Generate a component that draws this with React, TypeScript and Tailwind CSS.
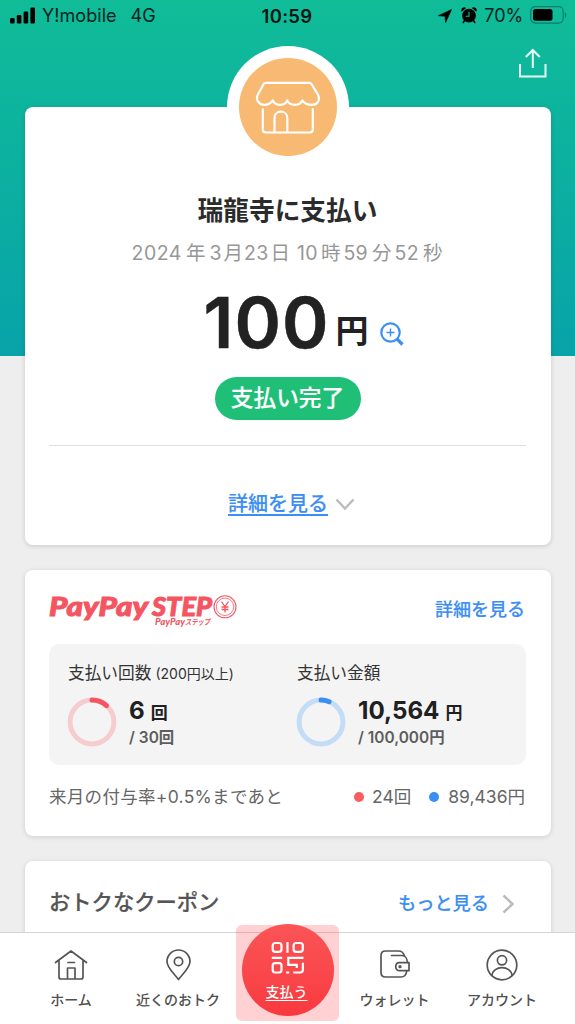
import type { ReactNode } from 'react';

function StatusBar() {
  return (
    <header className="flex h-8 items-center pl-[10px] pr-[8px] text-[18px] leading-8 text-[#04231d]">
      <div className="flex flex-1 items-center">
        <svg className="-mt-[2px]" width="26" height="17" viewBox="0 0 26 17" fill="#000">
          <rect x="0" y="11" width="4.600" height="5.500" rx="1.200" />
          <rect x="6.800" y="8" width="4.600" height="8.500" rx="1.200" />
          <rect x="13.600" y="4.500" width="4.600" height="12" rx="1.200" />
          <rect x="20.400" y="0.500" width="4.600" height="16" rx="1.200" />
        </svg>
        <span className="ml-[6px] tracking-[0.05px]">Y!mobile</span>
        <span className="ml-[14px]">4G</span>
      </div>
      <span className="pr-[3px] text-[18.500px] font-semibold tracking-[0.3px] text-[#02150f]">10:59</span>
      <div className="flex flex-1 items-center justify-end">
        <svg width="14" height="14" viewBox="0 0 14 14" fill="#000">
          <path d="M13.600 0.400 7.600 13.600 7 7.200 0.400 6.700Z" stroke="#000" strokeWidth="0.600" />
        </svg>
        <svg className="-mt-[2px] ml-[9px]" width="16" height="17" viewBox="0 0 16 17">
          <circle cx="8" cy="8.700" r="6.900" />
          <path d="M0.700 4.800A3 3 0 0 1 5.200 1ZM15.300 4.800A3 3 0 0 0 10.800 1Z" />
          <path d="m3.500 13.500-1.300 2m10.300-2 1.300 2" stroke="#000" strokeWidth="1.500" strokeLinecap="round" />
          <path d="M8 4.700v4.500H4.700" fill="none" stroke="#10b99a" strokeWidth="1.100" />
        </svg>
        <span className="ml-[7px] tracking-[-0.1px]">70%</span>
        <svg className="-mt-[2px] ml-[7px]" width="37" height="18" viewBox="0 0 37 18">
          <rect x="0.700" y="0.700" width="32.500" height="16.400" rx="4.500" fill="none" stroke="#087f6b" strokeWidth="1.200" />
          <rect x="3" y="3" width="19.500" height="11.800" rx="2.500" fill="#000" />
          <path d="M34.800 6v6c2-1 2-5 0-6Z" fill="#087f6b" />
        </svg>
      </div>
    </header>
  );
}

function ShopBadge() {
  return (
    <div className="flex size-[122px] items-center justify-center rounded-full bg-white pb-px">
      <div className="flex size-[98px] items-center justify-center rounded-full bg-[#f8b972]">
        <svg className="-ml-px" width="66" height="54" viewBox="0 0 66 54" fill="none" stroke="#fff" strokeWidth="2.200" strokeLinecap="round" strokeLinejoin="round">
          <path d="M12 2.800h43c1.200 0 2 .5 2.600 1.500l6.200 10c3 6-.5 10.500-6 10.500-4 0-7.500-1.500-9.500-4.500-2.500 6-12.500 6-15 0-2.500 6-12 6-14.500 0-2 3-5 4.500-8.500 4.500-5.500 0-9-5-6.500-10L9.500 4.300C10 3.300 11 2.800 12 2.800Z" />
          <path d="M8.800 29V49.500c0 2 .8 3 3 3h44c2.200 0 3-1 3-3V29M20.500 52V38c0-8.500 12.800-8.500 12.800 0v14" />
        </svg>
      </div>
    </div>
  );
}

function PaymentCard() {
  return (
    <section className="flex h-[438px] flex-col items-center rounded-lg bg-white shadow-[0_1px_5px_rgba(0,0,0,0.16)]">
      <div className="-mt-[61px]"><ShopBadge /></div>
      <h1 className="mt-[25px] text-[25.700px] font-bold leading-9 text-[#2b2b2b]">瑞龍寺に支払い</h1>
      <p className="mt-[8px] flex h-[34px] items-center whitespace-nowrap pr-px text-[19.500px] text-[#979797]">
        <span className="tracking-[0.5px]">2024</span><span className="ml-[4px]">年</span>
        <span className="ml-[4px]">3</span><span className="ml-[2px]">月</span>
        <span className="ml-[1px] tracking-[0.3px]">23</span><span className="ml-[2px]">日</span>
        <span className="ml-[7px] tracking-[0.3px]">10</span><span className="ml-[3px]">時</span>
        <span className="ml-[3px] tracking-[0.3px]">59</span><span className="ml-[4px]">分</span>
        <span className="ml-[3px] tracking-[0.3px]">52</span><span className="ml-[4px]">秒</span>
      </p>
      <div className="ml-[33px] mt-[16px] flex h-[72px] items-start text-[#222]">
        <span className="text-[70.500px] font-semibold leading-[72px] tracking-[1px] [-webkit-text-stroke:0.5px]">100</span>
        <span className="ml-[6px] mt-[26px] text-[33px] font-bold leading-[36px]">円</span>
        <svg className="ml-[12px] mt-[35px]" width="24" height="24" viewBox="0 0 24 24" fill="none" stroke="#3b8ef3">
          <circle cx="10.500" cy="10.500" r="9.200" strokeWidth="2.200" />
          <path d="m17 17 5.500 5.500" strokeWidth="3.200" />
          <path d="M10.500 6.500v8m-4-4h8" strokeWidth="1.400" />
        </svg>
      </div>
      <div className="mt-[18px] flex h-[43px] w-[146px] items-center justify-center rounded-full bg-[#20bf78] pb-px text-[22.700px] font-medium text-white [-webkit-text-stroke:0.15px]">支払い完了</div>
      <div className="mt-[25px] h-px w-[477px] bg-[#dfdfdf]" />
      <a className="ml-[8px] mt-[43px] flex items-center text-[20px] font-medium leading-[30px] text-[#3b8ef3] [-webkit-text-stroke:0.15px]">
        <span className="underline decoration-[1.500px] underline-offset-[3px]">詳細を見る</span>
        <svg className="ml-[7px]" width="20" height="13" viewBox="0 0 20 13" fill="none" stroke="#bcbcbc" strokeWidth="2.500"><path d="m1.500 1.500 8.500 9 8.500-9" /></svg>
      </a>
    </section>
  );
}

function StepLogo() {
  return (
    <svg className="-mt-[9px]" width="190" height="50" viewBox="0 -8 190 50" fill="#f45561">
      <g className="font-['Lato'] font-black italic" stroke="#f45561">
        <text x="0" y="22.500" fontSize="27" textLength="99" lengthAdjust="spacingAndGlyphs" strokeWidth="1">PayPay</text>
        <text x="103" y="22.500" fontSize="27" textLength="60" lengthAdjust="spacingAndGlyphs" strokeWidth="1">STEP</text>
        <text x="106" y="31.500" fontSize="8.500" textLength="30" lengthAdjust="spacingAndGlyphs" strokeWidth="0">PayPay</text>
      </g>
      <text x="136" y="31.500" fontSize="8" textLength="25" lengthAdjust="spacingAndGlyphs" className="font-['Noto_Sans_CJK_JP'] font-bold italic">ステップ</text>
      <circle cx="176" cy="13.800" r="11" fill="none" stroke="#f45561" strokeWidth="1.100" />
      <circle cx="176" cy="13.800" r="8.700" fill="none" stroke="#f45561" strokeWidth="0.800" />
      <path d="m172.500 8.500 3.500 5 3.500-5m-3.500 5v6m-3.500-5.500h7m-7 2.500h7" fill="none" stroke="#f45561" strokeWidth="1.300" />
    </svg>
  );
}

function Ring({ track, color, arc }: { track: string; color: string; arc: string }) {
  return (
    <svg width="50" height="50" viewBox="0 0 50 50" fill="none">
      <circle cx="25" cy="25" r="21.900" stroke={track} strokeWidth="5" />
      <path d={arc} stroke={color} strokeWidth="5" strokeLinecap="round" />
    </svg>
  );
}

function Metric({ title, note, value, unit, goal, ring }: { title: string; note?: string; value: string; unit: string; goal: string; ring: ReactNode }) {
  return (
    <div className="w-[229px]">
      <p className="h-6 whitespace-nowrap text-[16.700px] leading-6 text-[#333]">{title}{note && <span className="ml-[4px] text-[14px]">{note}</span>}</p>
      <div className="-ml-px mt-[12px] flex">
        {ring}
        <div className="ml-[12px]">
          <p className="flex h-7 items-baseline leading-7 text-[#202020]">
            <span className="text-[24.200px] font-bold leading-7">{value}</span>
            <span className="ml-[6px] text-[17px] font-bold leading-7">{unit}</span>
          </p>
          <p className="mt-[2px] whitespace-nowrap text-[15.400px] font-semibold leading-[22px] text-[#5d5d5d]"><span className="mr-[4px]">/</span>{goal}</p>
        </div>
      </div>
    </div>
  );
}

function StepCard() {
  return (
    <section className="mt-[25px] h-[266px] rounded-lg bg-white px-[24.500px] pt-[24px] shadow-[0_1px_5px_rgba(0,0,0,0.14)]">
      <div className="flex h-[50px] items-start justify-between">
        <StepLogo />
        <a className="mr-px mt-px text-[18px] font-medium leading-[30px] text-[#3b8ef3] [-webkit-text-stroke:0.15px]">詳細を見る</a>
      </div>
      <div className="flex h-[121px] rounded-[10px] bg-[#f4f4f4] pl-[19px] pt-[17px]">
        <Metric title="支払い回数" note="(200円以上)" value="6" unit="回" goal="30回"
          ring={<Ring track="#f6cdcf" color="#f45561" arc="M25 3.100A21.900 21.900 0 0 1 39.500 8.600" />} />
        <Metric title="支払い金額" value="10,564" unit="円" goal="100,000円"
          ring={<Ring track="#c4dcf6" color="#3b8ef3" arc="M25 3.100A21.900 21.900 0 0 1 33.100 4.700" />} />
      </div>
      <div className="mt-[17px] flex items-center whitespace-nowrap pr-px text-[17.500px] leading-[30px] text-[#666]">
        <p className="flex-1 tracking-[0.3px]">来月の付与率+0.5%まであと</p>
        <span className="mr-[8px] size-[10px] rounded-full bg-[#f95d5d]" />
        <span>24回</span>
        <span className="ml-[18px] mr-[9px] size-[10px] rounded-full bg-[#3b8ef3]" />
        <span>89,436円</span>
      </div>
    </section>
  );
}

function NavItem({ label, icon, width }: { label: string; icon: ReactNode; width: string }) {
  return (
    <div className={`flex flex-col items-center pt-[15px] text-[#505050] ${width}`}>
      <svg width="34" height="34" viewBox="0 0 34 34" fill="none" stroke="#555" strokeWidth="1.700" strokeLinecap="round" strokeLinejoin="round">{icon}</svg>
      <span className="mt-[7px] whitespace-nowrap text-[14px] font-medium leading-[22px]">{label}</span>
    </div>
  );
}

function BottomNav() {
  return (
    <nav className="absolute inset-x-0 bottom-0 flex h-[92px] border-t border-[#d4d4d4] bg-white pl-[17px]">
      <NavItem width="w-[108px]" label="ホーム" icon={<><path d="m1.500 14.500 15.500-11.500L32.500 14.500M5 12.500v16.500c0 1.300.7 2 2 2h20c1.300 0 2-.7 2-2V12.500M13.500 30.500V20h7.500v10.500" /><path d="M14 14.500h6.500" /></>} />
      <NavItem width="w-[106px]" label="近くのおトク" icon={<><path d="M17.500 31.500C13.500 26 6 20 6 13.500a11.500 11.500 0 0 1 23 0C29 20 21.500 26 17.500 31.500Z" /><circle cx="17.500" cy="13.500" r="4.200" /></>} />
      <div className="w-[111px]" />
      <NavItem width="w-[105px]" label="ウォレット" icon={<><path d="M29.500 14.500c-.3-4-2.500-7-5.500-7H13.500M26.500 8C25.500 4.500 24 3 20.500 3H7.500C4.500 3 3 4.500 3 7.500v17C3 27.500 4.500 29 7.500 29H23c3.500 0 5.200-1.800 5.700-6" /><path d="M31 14.700h-9.500c-5 0-5 8 0 8H31Z" /><circle cx="22" cy="18.700" r="0.800" fill="#555" /></>} />
      <NavItem width="w-[110px]" label="アカウント" icon={<><circle cx="17" cy="17" r="14.800" /><circle cx="17" cy="12.300" r="4.600" /><path d="M7 27.500c1-10.500 19-10.500 20 0" /></>} />
      <div className="absolute -top-[8px] left-[236px] flex h-[96px] w-[103px] justify-center rounded-md bg-[#ff484d]/25">
        <div className="-mt-[1px] flex size-[92px] flex-col items-center rounded-full bg-gradient-to-b from-[#fb5457] to-[#f8393f] pt-[17px] text-white">
          <svg width="34" height="34" viewBox="0 0 34 34" fill="none" stroke="#fff" strokeWidth="2.200">
            <rect x="1.700" y="2" width="8.800" height="8.800" rx="2.500" />
            <path d="M16.500 1v10.800M0.800 16.800h10.400" />
            <rect x="22.600" y="2" width="9.200" height="8.800" rx="2.500" />
            <rect x="1.700" y="22.200" width="8.800" height="9.300" rx="2.500" />
            <path d="M32.500 16.800H17.300v7h8.500v3.200M15.200 31.500h3M22.300 31.500h7c1.900 0 2.600-.8 2.600-2.700v-7" />
          </svg>
          <span className="mt-[7px] pr-[2px] text-[14px] font-medium leading-[20px] underline decoration-[1px] underline-offset-[3px]">支払う</span>
        </div>
      </div>
    </nav>
  );
}

export default function App() {
  return (
    <div className="relative h-[1024px] w-[575px] overflow-hidden bg-[#eee] bg-[linear-gradient(to_bottom,#10bc98,#08a3a9)] bg-[length:100%_356px] bg-no-repeat font-['Inter','Noto_Sans_CJK_JP',sans-serif]">
      <StatusBar />
      <div className="flex h-[75px] justify-end pr-[28px] pt-[16px]">
        <svg width="28" height="30" viewBox="0 0 28 30" fill="none" stroke="#e9fffa" strokeWidth="2"><path d="M1 16v12.500h25.500V16M13.800 20V2M6.800 9l7-7 7 7" /></svg>
      </div>
      <main className="px-[24.500px]">
        <PaymentCard />
        <StepCard />
        <section className="mt-[25px] flex h-[170px] items-start rounded-t-lg bg-white px-[24.500px] pt-[24px] shadow-[0_1px_5px_rgba(0,0,0,0.14)]">
          <h2 className="flex-1 text-[21.300px] font-medium leading-[34px] text-[#555] [-webkit-text-stroke:0.2px]">おトクなクーポン</h2>
          <a className="text-[18.200px] font-medium leading-[36px] text-[#3b8ef3] [-webkit-text-stroke:0.15px]">もっと見る</a>
          <svg className="ml-[13px] mr-[11px] mt-[9px]" width="13" height="20" viewBox="0 0 13 20" fill="none" stroke="#bcbcbc" strokeWidth="2.500"><path d="m1.500 1.500 9 8.500-9 8.500" /></svg>
        </section>
      </main>
      <BottomNav />
    </div>
  );
}
